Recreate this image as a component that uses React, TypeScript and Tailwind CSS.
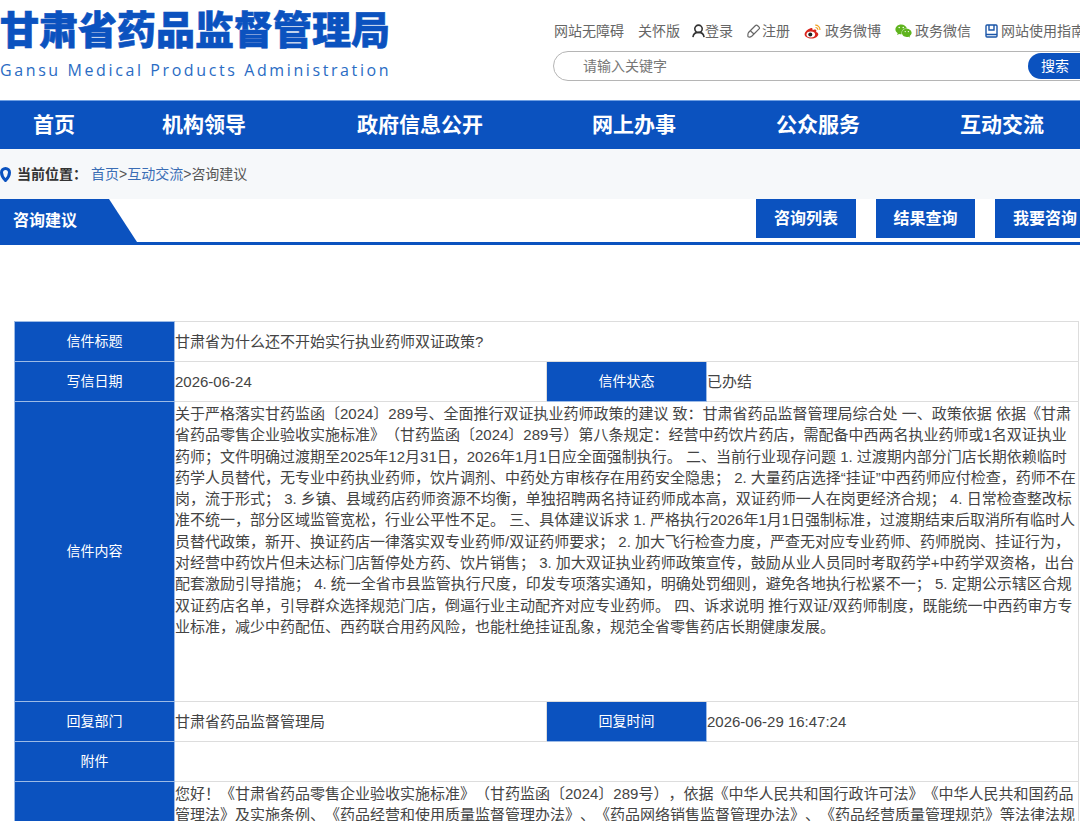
import { FaWeixin } from "react-icons/fa";

const blue = "bg-[#0b52bf]";
const font = "font-['Liberation_Sans','Noto_Sans_CJK_SC',sans-serif]";

const letter = "关于严格落实甘药监函〔2024〕289号、全面推行双证执业药师政策的建议 致：甘肃省药品监督管理局综合处 一、政策依据 依据《甘肃省药品零售企业验收实施标准》（甘药监函〔2024〕289号）第八条规定：经营中药饮片药店，需配备中西两名执业药师或1名双证执业药师；文件明确过渡期至2025年12月31日，2026年1月1日应全面强制执行。 二、当前行业现存问题 1. 过渡期内部分门店长期依赖临时药学人员替代，无专业中药执业药师，饮片调剂、中药处方审核存在用药安全隐患； 2. 大量药店选择“挂证”中西药师应付检查，药师不在岗，流于形式； 3. 乡镇、县域药店药师资源不均衡，单独招聘两名持证药师成本高，双证药师一人在岗更经济合规； 4. 日常检查整改标准不统一，部分区域监管宽松，行业公平性不足。 三、具体建议诉求 1. 严格执行2026年1月1日强制标准，过渡期结束后取消所有临时人员替代政策，新开、换证药店一律落实双专业药师/双证药师要求； 2. 加大飞行检查力度，严查无对应专业药师、药师脱岗、挂证行为，对经营中药饮片但未达标门店暂停处方药、饮片销售； 3. 加大双证执业药师政策宣传，鼓励从业人员同时考取药学+中药学双资格，出台配套激励引导措施； 4. 统一全省市县监管执行尺度，印发专项落实通知，明确处罚细则，避免各地执行松紧不一； 5. 定期公示辖区合规双证药店名单，引导群众选择规范门店，倒逼行业主动配齐对应专业药师。 四、诉求说明 推行双证/双药师制度，既能统一中西药审方专业标准，减少中药配伍、西药联合用药风险，也能杜绝挂证乱象，规范全省零售药店长期健康发展。";
const reply = "您好！《甘肃省药品零售企业验收实施标准》（甘药监函〔2024〕289号），依据《中华人民共和国行政许可法》《中华人民共和国药品管理法》及实施条例、《药品经营和使用质量监督管理办法》、《药品网络销售监督管理办法》、《药品经营质量管理规范》等法律法规";

function Label({ children }: { children?: React.ReactNode }) {
  return (
    <td className={`${blue} border border-[#9dbbe6] p-0 text-center align-middle text-[14px] text-white`}>
      {children}
    </td>
  );
}

function Value({ children, colSpan, top }: { children?: React.ReactNode; colSpan?: number; top?: boolean }) {
  return (
    <td colSpan={colSpan} className={`border border-[#dddddd] p-0 text-[15px] leading-[21.3px] text-[#444] [text-spacing-trim:space-all] ${top ? "align-top pt-px" : "align-middle"}`}>
      {children}
    </td>
  );
}

function TopLinks() {
  return (
    <div className="flex items-center whitespace-nowrap pl-[554px] text-[14px] leading-5 text-[#666]">
      <span className="shrink-0">网站无障碍</span>
      <span className="ml-[14px] shrink-0">关怀版</span>
      <svg className="ml-[12px] h-[14px] w-[13px] shrink-0" viewBox="0 0 14 15" fill="none" stroke="#333" strokeWidth="1.7">
        <circle cx="7" cy="5.2" r="4" />
        <path d="M1 14c.5-3.500 2.500-5 6-5s5.500 1.500 6 5" />
      </svg>
      <span className="shrink-0">登录</span>
      <svg className="ml-[14px] h-[14px] w-[15px] shrink-0" viewBox="0 0 15 14" fill="none" stroke="#666" strokeWidth="1.2">
        <path d="M1.500 8.500 8.500 1.500c1.200-1.100 4.800 1.800 3.800 3.200L5 12c-1.200 1-3.200 1.200-3.800.8S.9 9.300 1.500 8.500Z" />
        <path d="M3.500 7l3.500 3" />
      </svg>
      <span className="shrink-0">注册</span>
      <svg className="ml-[14px] h-[15px] w-[17px] shrink-0" viewBox="0 0 17 15">
        <path d="M6.500 4.200C3.500 5.300.6 8 .6 10.300c0 2.700 3.400 4.200 6.700 4.200 4 0 7-2.200 7-4.300 0-1.400-1.300-2-2.200-2.300.5-1.200.3-2.200-.9-2.400-1 0-2.200.5-2.600.7.200-1.200-.1-3-2.100-2Z" fill="#d9241c" />
        <ellipse cx="6.800" cy="10.500" rx="4.300" ry="3" fill="#fff" />
        <circle cx="6.300" cy="10.600" r="2" fill="#222" />
        <path d="M11.200 1.200c2.500-.2 4.800 1.800 4.800 4.700M11.500 3.500c1.300-.1 2.400 1 2.300 2.400" fill="none" stroke="#f0a020" strokeWidth="1.200" />
      </svg>
      <span className="ml-[4px] shrink-0">政务微博</span>
      <FaWeixin className="ml-[14px] h-4 w-[17px] shrink-0 text-[#5fb41e]" />
      <span className="ml-[3px] shrink-0">政务微信</span>
      <svg className="ml-[14px] h-[14px] w-[13px] shrink-0" viewBox="0 0 13 14" fill="none" stroke="#1a55a8" strokeWidth="1.4">
        <rect x="1" y="1" width="11" height="12" rx="1" />
        <path d="M4 1v5h5V1M1 10.500h11" />
      </svg>
      <span className="ml-[3px] shrink-0">网站使用指南</span>
    </div>
  );
}

export default function App() {
  return (
    <div className={`${font} h-[821px] w-[1080px] overflow-hidden bg-white`}>
      <header className="relative flex h-[100px] flex-col">
        <div className="absolute left-0 top-[8px] whitespace-nowrap text-[39px] font-black leading-[46px] text-[#0b52bf] [-webkit-text-stroke:0.6px_#0b52bf]">
          甘肃省药品监督管理局
        </div>
        <div className="absolute left-0 top-[59px] whitespace-nowrap font-['Open_Sans',sans-serif] text-[16px] leading-[22px] tracking-[2.6px] text-[#2a6cc4]">
          Gansu Medical Products Administration
        </div>
        <div className="pt-[21px]">
          <TopLinks />
        </div>
        <div className="ml-[553px] mt-[10px] flex h-[30px] w-[540px] shrink-0 items-center rounded-l-full border border-[#b5b5b5] pl-[29px]">
          <span className="shrink-0 text-[14px] text-[#777]">请输入关键字</span>
          <span className={`${blue} ml-[361px] flex h-[26px] w-[52px] shrink-0 items-center rounded-l-full pl-[13px] text-[14px] text-white`}>搜索</span>
        </div>
      </header>

      <nav className={`${blue} grid h-[49px] grid-cols-[108px_192px_240px_188px_180px_188px] items-center whitespace-nowrap border-t border-[#6f9fe3] text-[21px] font-bold text-white`}>
        <span className="text-center">首页</span>
        <span className="text-center">机构领导</span>
        <span className="text-center">政府信息公开</span>
        <span className="text-center">网上办事</span>
        <span className="text-center">公众服务</span>
        <span className="text-center">互动交流</span>
      </nav>

      <div className="flex h-[50px] items-center whitespace-nowrap bg-[#f6f8fa] text-[14px] text-[#555]">
        <svg className="h-[15px] w-[11px]" viewBox="0 0 11 15" fill="none">
          <path d="M5.500 13.500C3 11 1.500 8.500 1.500 5.500a4 4 0 0 1 8 0C9.500 8.500 8 11 5.500 13.500Z" stroke="#0b52bf" strokeWidth="3" />
        </svg>
        <span className="ml-[6px] font-bold text-[#333]">当前位置：</span>
        <span className="ml-1 text-[#3a6db5]">首页</span>
        <span>&gt;</span>
        <span className="text-[#3a6db5]">互动交流</span>
        <span>&gt;</span>
        <span>咨询建议</span>
      </div>

      <div className="flex h-[46px] items-start border-b-[3px] border-[#0b52bf] whitespace-nowrap font-bold text-white">
        <div className={`${blue} flex h-[43px] w-[137px] shrink-0 items-center pl-[13px] text-[16px] [clip-path:polygon(0_0,109px_0,137px_100%,0_100%)]`}>
          咨询建议
        </div>
        <div className={`${blue} ml-[619px] flex h-[39px] w-[100px] shrink-0 items-center justify-center text-[16px]`}>咨询列表</div>
        <div className={`${blue} ml-5 flex h-[39px] w-[99px] shrink-0 items-center justify-center text-[16px]`}>结果查询</div>
        <div className={`${blue} ml-5 flex h-[39px] w-[100px] shrink-0 items-center justify-center text-[16px]`}>我要咨询</div>
      </div>

      <div className="pl-[14px] pt-[76px]">
        <table className="w-[1064px] table-fixed border-collapse">
          <colgroup>
            <col className="w-[160px]" />
            <col className="w-[372px]" />
            <col className="w-[160px]" />
            <col className="w-[372px]" />
          </colgroup>
          <tbody>
            <tr className="h-10">
              <Label>信件标题</Label>
              <Value colSpan={3}>甘肃省为什么还不开始实行执业药师双证政策?</Value>
            </tr>
            <tr className="h-10">
              <Label>写信日期</Label>
              <Value>2026-06-24</Value>
              <Label>信件状态</Label>
              <Value>已办结</Value>
            </tr>
            <tr className="h-[300px]">
              <Label>信件内容</Label>
              <Value colSpan={3} top>{letter}</Value>
            </tr>
            <tr className="h-10">
              <Label>回复部门</Label>
              <Value>甘肃省药品监督管理局</Value>
              <Label>回复时间</Label>
              <Value>2026-06-29 16:47:24</Value>
            </tr>
            <tr className="h-10">
              <Label>附件</Label>
              <Value colSpan={3} />
            </tr>
            <tr className="h-[200px]">
              <Label>回复内容</Label>
              <Value colSpan={3} top>{reply}</Value>
            </tr>
          </tbody>
        </table>
      </div>
    </div>
  );
}
